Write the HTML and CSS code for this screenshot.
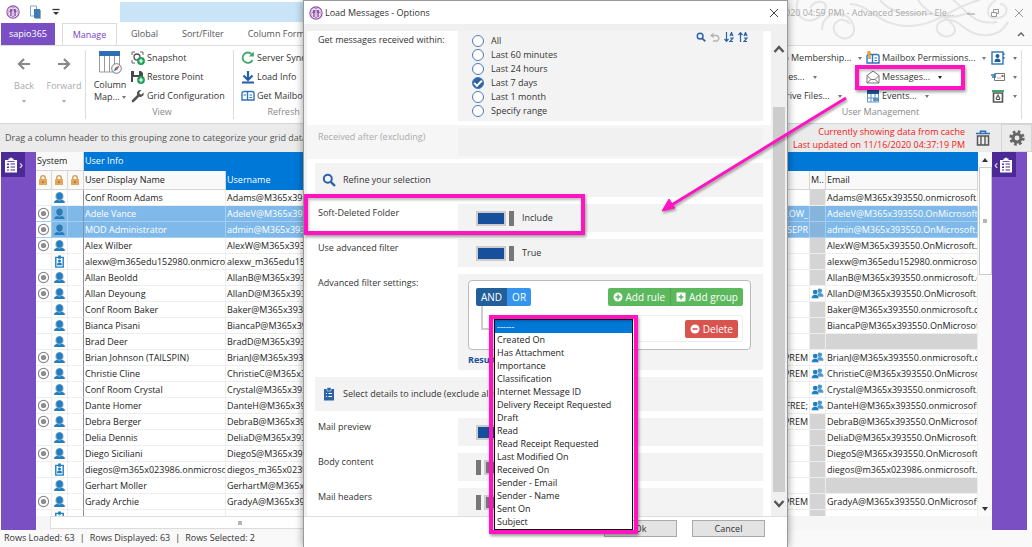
FILE: index.html
```html
<!DOCTYPE html>
<html lang="en">
	<head>
		<meta charset="UTF-8" />
		<meta name="viewport" content="width=device-width, initial-scale=1.0" />
		<title>sapio365 - Load Messages</title>
		<link rel="stylesheet" href="styles.css">
	</head>

	<body>
		<svg class="sprite" aria-hidden="true">
			<symbol id="logo" viewBox="0 0 16 16">
				<circle cx="8" cy="8" r="7" fill="#fff" stroke="#8e4fa8" stroke-width="1.3"/>
				<circle cx="8" cy="8" r="5.4" fill="none" stroke="#b88aca" stroke-width=".8"/>
				<path d="M5 4.5h2.2v2L6.5 8v4.5H4.800V8.500L3.500 8zM8.800 4.500H11L12.500 8l-1.300.5v4H9.500V8l-.7-1.500z" fill="#8e4fa8"/>
				<path d="M8 2v12" stroke="#8e4fa8" stroke-width=".8"/>
			</symbol>
			<symbol id="user" viewBox="0 0 14 14">
				<path d="M2.500 6a4.500 5 0 0 1 9 0c0 2-1 3-1.500 3.500l3 1.500v2H1v-2l3-1.500C3.500 9 2.500 8 2.500 6z" fill="#9fb4c4"/>
				<path d="M7 1.500c2.400 0 3.700 1.600 3.500 4C10.300 8 9 9.500 7 9.500S3.700 8 3.500 5.500c-.2-2.400 1.100-4 3.500-4zM1.500 13c0-2.500 1.500-3 3.500-3.200l2 .7 2-.7c2 .2 3.500.7 3.500 3.200z" fill="#1f7fc1"/>
			</symbol>
			<symbol id="badge" viewBox="0 0 14 14">
				<path d="M3 2.500h8V13H3z" fill="#fff" stroke="#1f7fc1" stroke-width="1.500"/>
				<path d="M5.500.5h3V4h-3z" fill="#1f7fc1"/>
				<circle cx="7" cy="6.500" r="1.600" fill="#1f7fc1"/>
				<path d="M4.300 11c0-2 1-2.800 2.700-2.800S9.700 9 9.700 11z" fill="#1f7fc1"/>
			</symbol>
			<symbol id="ring" viewBox="0 0 14 14">
				<circle cx="7" cy="7" r="5.500" fill="#fff" stroke="#8c8c8c" stroke-width="1.200"/>
				<circle cx="7" cy="7" r="2.800" fill="#8c8c8c"/>
			</symbol>
			<symbol id="people" viewBox="0 0 14 12">
				<circle cx="9.500" cy="3" r="2.500" fill="#4d97cc"/>
				<path d="M6.500 9.500c0-3 1-4 3-4s4 .8 4 4z" fill="#4d97cc"/>
				<circle cx="4.500" cy="4.500" r="2.500" fill="#1f7fc1"/>
				<path d="M.5 11.500c0-3 1.500-4.500 4-4.500s4 1.500 4 4.500z" fill="#1f7fc1" stroke="#fff" stroke-width=".5"/>
			</symbol>
			<symbol id="lock" viewBox="0 0 12 12">
				<path d="M3.800 5.500V3.800a2.200 2.200 0 0 1 4.400 0v1.700" fill="none" stroke="#d99b4c" stroke-width="1.400"/>
				<rect x="2" y="5" width="8" height="6" rx=".5" fill="#e3a857"/>
				<path d="M6 7v2" stroke="#8d5f22"/>
			</symbol>
			<symbol id="clipboard" viewBox="0 0 14 16">
				<path d="M1 3h12v12.500H1zM4.500 1.500h1.300L7 .2l1.200 1.300h1.300V4h-5z" fill="#fff"/>
				<path d="M3 6.500h2v1.500H3zM3 9.500h2V11H3zM3 12.500h2v1H3zM6.500 6.500H11v1H6.500zM6.500 9.500H11v1H6.500zM6.500 12.500H11v1H6.500z" fill="#4b2a96"/>
				<path d="M3.500 4.500h7" stroke="#4b2a96" stroke-width=".8"/>
			</symbol>
			<symbol id="search" viewBox="0 0 14 14">
				<circle cx="5.800" cy="5.800" r="4" fill="none" stroke="#2b62a8" stroke-width="2"/>
				<path d="M8.800 8.800L13 13" stroke="#2b62a8" stroke-width="2.400"/>
			</symbol>
			<symbol id="mailbox" viewBox="0 0 14 12">
				<path d="M1 10V3.500A2 2 0 0 1 3 1.500h8a2 2 0 0 1 2 2V10zM6.500 10V2" fill="#fff" stroke="#2e75b6" stroke-width="1.400"/>
				<path d="M2.500 5h2.500M8.500 5H11M8.500 7.500H11" stroke="#2e75b6" stroke-width="1.200"/>
			</symbol>
			<symbol id="plus" viewBox="0 0 8 8">
				<circle cx="4" cy="4" r="3.900" fill="#1e9e56"/>
				<path d="M4 1.800v4.400M1.800 4h4.400" stroke="#fff" stroke-width="1.200"/>
			</symbol>
		</svg>

		<div class="app">
			<header class="titlebar">
				<div class="quick-access">
					<svg class="i14"><use href="#logo"/></svg>
					<svg class="i14" viewBox="0 0 14 14"><path d="M1.500 1h6v10h-6z" fill="#fff" stroke="#7ba7cf"/><path d="M5 4h6v9H5z" fill="#3b7cb8"/><path d="M11.500 5v8.500H6" stroke="#aaa" fill="none"/></svg>
					<svg class="i10" viewBox="0 0 10 10"><path d="M1.500 2.500h7" stroke="#333" stroke-width="1.300"/><path d="M2 5h6L5 8z" fill="#333"/></svg>
				</div>
				<div class="title-fill"></div>
				<div class="title-right">
					<svg class="swirl" viewBox="0 0 244 45" fill="none" stroke="#e4e4e4" stroke-width="2">
						<path d="M10 0c-6 18 12 28 24 14S26-2 22 8M34 30c0-18 22-22 30-8s-8 22-16 12 6-20 14-10M62 4c20 0 28 22 58 22s44-20 72-26M92 0c20 24 50 6 68 20s-4 22-10 12 10-18 24-6 36 14 46-4M130 0c10 16 30 22 52 12M165 0c14 10 20 26 44 22M208 0c-12 8-10 20 2 18s10-14 2-14"/>
					</svg>
					<span class="window-title">(11/16/2020 04:59 PM) - Advanced Session - Ele...</span>
					<button class="win-btn" aria-label="Minimize"><svg class="i10" viewBox="0 0 10 10"><path d="M1 6h8" stroke="#999"/></svg></button>
					<button class="win-btn" aria-label="Restore"><svg class="i10" viewBox="0 0 10 10" fill="none" stroke="#999"><path d="M1.500 4.500h5v4h-5zM3.500 4V1.500h5v4H7"/></svg></button>
					<button class="win-btn" aria-label="Close window"><svg class="i10" viewBox="0 0 10 10"><path d="M1 1l8 8M9 1L1 9" stroke="#999"/></svg></button>
				</div>
			</header>
			<nav class="tabs">
				<button class="tab brand">sapio365</button>
				<button class="tab active">Manage</button>
				<button class="tab">Global</button>
				<button class="tab">Sort/Filter</button>
				<button class="tab">Column Format</button>
				<svg class="i10 collapse" viewBox="0 0 10 10"><path d="M2 7l3-3 3 3" fill="none" stroke="#666" stroke-width="1.500"/></svg>
			</nav>
			<section class="ribbon">
				<div class="history">
					<button class="cmd-tall muted">
						<svg class="i16" viewBox="0 0 16 16" fill="none" stroke="#888" stroke-width="2.200"><path d="M14 8H3M8 3L3 8l5 5"/></svg>
						<span>Back</span><i class="caret"></i>
					</button>
					<button class="cmd-tall muted">
						<svg class="i16" viewBox="0 0 16 16" fill="none" stroke="#888" stroke-width="2.200"><path d="M2 8h11M8 3l5 5-5 5"/></svg>
						<span>Forward</span><i class="caret"></i>
					</button>
				</div>
				<div class="group view-group">
					<div class="group-body">
						<button class="column-map">
							<svg class="i24" viewBox="0 0 24 24"><path d="M1.500 5h20v17h-20zM6.500 5v17M11.500 5v17M16.500 5v17" fill="#fff" stroke="#999"/><path d="M1 1h21v5H1z" fill="#2e6fb5"/><circle cx="18.500" cy="18.500" r="4.800" fill="#fff" stroke="#777"/><path d="M21.500 15.500l-2 4-2-2z" fill="#d9442c"/><path d="M15.500 21.500l2-4 2 2z" fill="#2e6fb5"/></svg>
							<span>Column<br>Map... <i class="caret"></i></span>
						</button>
						<div class="cmd-list">
							<button class="cmd"><svg class="i14" viewBox="0 0 14 14"><path d="M1 4V1h3M9 1h3v3M1 9v3h3" fill="none" stroke="#666"/><circle cx="6" cy="6" r="3" fill="none" stroke="#555" stroke-width="1.300"/><use href="#plus" x="6" y="6" width="8" height="8"/></svg>Snapshot</button>
							<button class="cmd"><svg class="i14" viewBox="0 0 14 14"><path d="M0 1h10l2 2v9H0z" fill="#4a4a4a"/><path d="M3 1h5v4H3zM2 7h8v5H2z" fill="#fff"/><use href="#plus" x="6" y="6" width="8" height="8"/></svg>Restore Point</button>
							<button class="cmd"><svg class="i14" viewBox="0 0 14 14"><path d="M2 12l5-5" stroke="#555" stroke-width="2.600" stroke-linecap="round"/><path d="M12.500 3.500L10.500 5.500 8.700 5l-.3-1.800 2-2A3.400 3.400 0 0 0 6 5.500 3.400 3.400 0 0 0 12.500 3.500z" fill="#555"/></svg>Grid Configuration</button>
						</div>
					</div>
					<div class="group-name">View</div>
				</div>
				<div class="group refresh-group">
					<div class="cmd-list">
						<button class="cmd"><svg class="i14" viewBox="0 0 14 14"><path d="M11.500 9A5.200 5.200 0 1 1 10.500 3" fill="none" stroke="#3fa66b" stroke-width="1.800"/><path d="M12.800.5v5h-5z" fill="#3fa66b"/></svg>Server Sync</button>
						<button class="cmd"><svg class="i14" viewBox="0 0 14 14"><path d="M7 1v9M2.500 5.500L7 10l4.500-4.500M1 12.500h12" fill="none" stroke="#2460a7" stroke-width="2.200"/></svg>Load Info</button>
						<button class="cmd"><svg class="i14"><use href="#mailbox"/></svg>Get Mailbox Info</button>
					</div>
					<div class="group-name">Refresh</div>
				</div>
				<div class="group user-group">
					<div class="group-body">
						<div class="cmd-list membership">
							<button class="cmd spread">Group Membership...<i class="caret"></i></button>
							<button class="cmd">Licenses...<i class="caret"></i></button>
							<button class="cmd">OneDrive Files...<i class="caret"></i></button>
						</div>
						<div class="cmd-list mail">
							<button class="cmd spread"><svg class="i14" viewBox="0 0 14 14"><use href="#mailbox" y="2" width="14" height="12"/><path d="M3 0v8M3 5h2" stroke="#e6a23c" stroke-width="1.600"/><circle cx="3" cy="2" r="2" fill="#e6a23c"/></svg>Mailbox Permissions...<i class="caret"></i></button>
							<button class="cmd"><svg class="i14" viewBox="0 0 14 14" fill="#fff" stroke="#777"><path d="M1 5.500L7 1l6 4.500V13H1z"/><path d="M1 5.500l4 4h4l4-4M1 13l4-3.500M13 13L9 9.500M5 9.500h4" fill="none"/></svg>Messages...<i class="caret dark"></i></button>
							<button class="cmd"><svg class="i14" viewBox="0 0 14 14"><path d="M1 1h12v4H1z" fill="#1f5c9e"/><path d="M1.500 5v8h11V5M1.500 9h11M5 5v8M9 5v8" fill="none" stroke="#5d93c4"/><path d="M7 9h5v3H7z" fill="#5d93c4"/></svg>Events...<i class="caret"></i></button>
						</div>
						<div class="cmd-list">
							<button class="cmd" aria-label="Contacts"><svg class="i14" viewBox="0 0 14 14"><rect x="1" y="1" width="11" height="12" fill="#fff" stroke="#2e75b6" stroke-width="1.400"/><path d="M3.500 11c0-3 1-3.500 3-3.500s3 .5 3 3.500z" fill="#1f5c9e"/><circle cx="6.500" cy="5" r="2" fill="#1f5c9e"/><path d="M12 2h1.500v2H12zM12 6h1.500v2H12z" fill="#2e75b6"/></svg><i class="caret"></i></button>
							<button class="cmd" aria-label="Send mail"><svg class="i14" viewBox="0 0 14 14"><path d="M3.500 3.500h10v7h-10z" fill="#fff" stroke="#777"/><path d="M0 5h5M1 7h4" stroke="#2e75b6" stroke-width="1.400"/><path d="M10.500 5h2v2h-2z" fill="#d9442c"/><path d="M6 8h4" stroke="#aaa"/></svg><i class="caret"></i></button>
							<button class="cmd" aria-label="Recycle bin"><svg class="i14" viewBox="0 0 14 14"><path d="M1 2h12" stroke="#3fa66b" stroke-width="2"/><path d="M2.500 4h9v9h-9z" fill="#fff" stroke="#555" stroke-width="1.600"/><path d="M5 10l2-4 2 4M5 10.500h4" fill="none" stroke="#555" stroke-width="1.200"/></svg><i class="caret"></i></button>
						</div>
					</div>
					<div class="group-name">User Management</div>
				</div>
			</section>

			<section class="groupbar">
				<span>Drag a column header to this grouping zone to categorize your grid data</span>
				<p class="cache-note">Currently showing data from cache<br>Last updated on 11/16/2020 04:37:19 PM</p>
				<button class="bar-btn" aria-label="Clear cache"><svg class="i16" viewBox="0 0 16 16"><path d="M1 3.500h14M5.500 3V1.200h5V3" fill="none" stroke="#2e6fb5" stroke-width="1.600"/><path d="M2.500 6h11v9h-11z" fill="#eee" stroke="#555" stroke-width="1.500"/><path d="M6 6v9M10 6v9" stroke="#555" stroke-width="1.400"/></svg></button>
				<button class="bar-btn gear" aria-label="Settings"><svg class="i16" viewBox="0 0 16 16"><circle cx="8" cy="8" r="6.300" fill="none" stroke="#666" stroke-width="2.800" stroke-dasharray="2.600 2.350"/><circle cx="8" cy="8" r="4" fill="none" stroke="#666" stroke-width="3.200"/></svg></button>
			</section>

			<main class="workspace">
				<aside class="side left"><button class="side-btn" aria-label="Open views panel"><svg class="i16"><use href="#clipboard"/></svg><b>›</b></button></aside>
				<div class="grid-area">
					<div class="grid-scroll">
						<table class="grid">
							<colgroup><col class="c-icon"><col class="c-icon"><col class="c-icon"><col class="c-name"><col><col class="c-plan"><col class="c-icon"><col class="c-email"></colgroup>
							<thead>
								<tr><th colspan="3">System</th><th colspan="5" class="blue">User Info</th></tr>
								<tr><th><svg class="i12"><use href="#lock"/></svg></th><th><svg class="i12"><use href="#lock"/></svg></th><th><svg class="i12"><use href="#lock"/></svg></th><th>User Display Name</th><th class="blue">Username</th><th></th><th>M..</th><th>Email</th></tr>
							</thead>
							<tbody>
								<tr><td></td><td><svg><use href="#user"/></svg></td><td></td><td>Conf Room Adams</td><td>Adams@M365x393550.onmicrosoft.com</td><td></td><td class="na"></td><td>Adams@M365x393550.onmicrosoft.com</td></tr>
								<tr class="sel"><td class="mark"><svg><use href="#ring"/></svg></td><td><svg><use href="#user"/></svg></td><td></td><td>Adele Vance</td><td>AdeleV@M365x393550.OnMicrosoft.com</td><td>FLOW_</td><td class="na"></td><td>AdeleV@M365x393550.OnMicrosoft.com</td></tr>
								<tr class="sel"><td class="mark"><svg><use href="#ring"/></svg></td><td><svg><use href="#user"/></svg></td><td></td><td>MOD Administrator</td><td>admin@M365x393550.OnMicrosoft.com</td><td>ENTERPRISEPR</td><td class="na"></td><td>admin@M365x393550.OnMicrosoft.com</td></tr>
								<tr><td><svg><use href="#ring"/></svg></td><td><svg><use href="#user"/></svg></td><td></td><td>Alex Wilber</td><td>AlexW@M365x393550.OnMicrosoft.com</td><td></td><td class="na"></td><td>AlexW@M365x393550.OnMicrosoft.com</td></tr>
								<tr><td></td><td><svg><use href="#badge"/></svg></td><td></td><td>alexw@m365edu152980.onmicrosoft.com</td><td>alexw_m365edu152980.onmicrosoft.com</td><td></td><td class="na"></td><td>alexw@m365edu152980.onmicrosoft.com</td></tr>
								<tr><td><svg><use href="#ring"/></svg></td><td><svg><use href="#user"/></svg></td><td></td><td>Allan Beoldd</td><td>AllanB@M365x393550.onmicrosoft.com</td><td></td><td class="na"></td><td>AllanB@M365x393550.onmicrosoft.com</td></tr>
								<tr><td><svg><use href="#ring"/></svg></td><td><svg><use href="#user"/></svg></td><td></td><td>Allan Deyoung</td><td>AllanD@M365x393550.OnMicrosoft.com</td><td></td><td><svg><use href="#people"/></svg></td><td>AllanD@M365x393550.OnMicrosoft.com</td></tr>
								<tr><td></td><td><svg><use href="#user"/></svg></td><td></td><td>Conf Room Baker</td><td>Baker@M365x393550.onmicrosoft.com</td><td></td><td class="na"></td><td>Baker@M365x393550.onmicrosoft.com</td></tr>
								<tr><td></td><td><svg><use href="#user"/></svg></td><td></td><td>Bianca Pisani</td><td>BiancaP@M365x393550.OnMicrosoft.com</td><td></td><td class="na"></td><td>BiancaP@M365x393550.OnMicrosoft.com</td></tr>
								<tr><td></td><td><svg><use href="#user"/></svg></td><td></td><td>Brad Deer</td><td>BradD@M365x393550.OnMicrosoft.com</td><td></td><td class="na"></td><td class="na"></td></tr>
								<tr><td><svg><use href="#ring"/></svg></td><td><svg><use href="#user"/></svg></td><td></td><td>Brian Johnson (TAILSPIN)</td><td>BrianJ@M365x393550.onmicrosoft.com</td><td>PREM</td><td><svg><use href="#people"/></svg></td><td>BrianJ@M365x393550.onmicrosoft.com</td></tr>
								<tr><td><svg><use href="#ring"/></svg></td><td><svg><use href="#user"/></svg></td><td></td><td>Christie Cline</td><td>ChristieC@M365x393550.OnMicrosoft.com</td><td>PREM</td><td><svg><use href="#people"/></svg></td><td>ChristieC@M365x393550.OnMicrosoft.com</td></tr>
								<tr><td></td><td><svg><use href="#user"/></svg></td><td></td><td>Conf Room Crystal</td><td>Crystal@M365x393550.onmicrosoft.com</td><td></td><td><svg><use href="#people"/></svg></td><td>Crystal@M365x393550.onmicrosoft.com</td></tr>
								<tr><td><svg><use href="#ring"/></svg></td><td><svg><use href="#user"/></svg></td><td></td><td>Dante Homer</td><td>DanteH@M365x393550.onmicrosoft.com</td><td>FREE;</td><td><svg><use href="#people"/></svg></td><td>DanteH@M365x393550.onmicrosoft.com</td></tr>
								<tr><td><svg><use href="#ring"/></svg></td><td><svg><use href="#user"/></svg></td><td></td><td>Debra Berger</td><td>DebraB@M365x393550.OnMicrosoft.com</td><td>PREM</td><td class="na"></td><td>DebraB@M365x393550.OnMicrosoft.com</td></tr>
								<tr><td></td><td><svg><use href="#user"/></svg></td><td></td><td>Delia Dennis</td><td>DeliaD@M365x393550.OnMicrosoft.com</td><td></td><td class="na"></td><td>DeliaD@M365x393550.OnMicrosoft.com</td></tr>
								<tr><td><svg><use href="#ring"/></svg></td><td><svg><use href="#user"/></svg></td><td></td><td>Diego Siciliani</td><td>DiegoS@M365x393550.OnMicrosoft.com</td><td></td><td class="na"></td><td>DiegoS@M365x393550.OnMicrosoft.com</td></tr>
								<tr><td></td><td><svg><use href="#badge"/></svg></td><td></td><td>diegos@m365x023986.onmicrosoft.com</td><td>diegos_m365x023986.onmicrosoft.com</td><td></td><td class="na"></td><td>diegos@m365x023986.onmicrosoft.com</td></tr>
								<tr><td></td><td><svg><use href="#user"/></svg></td><td></td><td>Gerhart Moller</td><td>GerhartM@M365x393550.OnMicrosoft.com</td><td></td><td class="na"></td><td class="na"></td></tr>
								<tr><td><svg><use href="#ring"/></svg></td><td><svg><use href="#user"/></svg></td><td></td><td>Grady Archie</td><td>GradyA@M365x393550.OnMicrosoft.com</td><td>PREM</td><td class="na"></td><td>GradyA@M365x393550.OnMicrosoft.com</td></tr>
								<tr><td></td><td><svg><use href="#badge"/></svg></td><td></td><td></td><td></td><td></td><td class="na"></td><td></td></tr>
							</tbody>
						</table>
						<div class="vscroll"><i class="up"></i><div class="vthumb"></div><i class="down"></i></div>
					</div>
					<div class="hscroll"><div class="hthumb"></div></div>
				</div>
				<aside class="side right"><button class="side-btn" aria-label="Open details panel"><b>‹</b><svg class="i16"><use href="#clipboard"/></svg></button></aside>
			</main>

			<footer class="status"><span>Rows Loaded: 63</span><span>|</span><span>Rows Displayed: 63</span><span>|</span><span>Rows Selected: 2</span></footer>
		</div>

		<div class="dialog" role="dialog" aria-labelledby="dialog-title">
			<header class="dialog-title">
				<svg class="i14"><use href="#logo"/></svg>
				<h1 id="dialog-title">Load Messages - Options</h1>
				<button class="win-btn" aria-label="Close"><svg class="i10" viewBox="0 0 10 10"><path d="M1 1l8 8M9 1L1 9" stroke="#444"/></svg></button>
			</header>
			<div class="dialog-main">
				<form class="options">
					<div class="option">
						<span class="option-label" id="within">Get messages received within:</span>
						<div class="option-value period">
							<div class="radios" role="radiogroup" aria-labelledby="within">
								<label><input type="radio" name="period">All</label>
								<label><input type="radio" name="period">Last 60 minutes</label>
								<label><input type="radio" name="period">Last 24 hours</label>
								<label><input type="radio" name="period" checked>Last 7 days</label>
								<label><input type="radio" name="period">Last 1 month</label>
								<label><input type="radio" name="period">Specify range</label>
							</div>
							<div class="tools">
								<svg class="i10"><use href="#search"/></svg>
								<svg class="i10" viewBox="0 0 10 10"><path d="M2 3.500h4.500a2.800 2.800 0 0 1 0 5.500H3" fill="none" stroke="#b5b5b5" stroke-width="1.400"/><path d="M0 3.500L3.500.8v5.400z" fill="#b5b5b5"/></svg>
								<svg class="i10" viewBox="0 0 10 10" fill="none" stroke="#2b62a8" stroke-width="1.200"><path d="M2.500 0v9M.5 7l2 2.300 2-2.300M6 4l1.500-3.500L9 4M6.500 3h2M6 6h3L6 9.500h3"/></svg>
								<svg class="i10" viewBox="0 0 10 10" fill="none" stroke="#2b62a8" stroke-width="1.200"><path d="M2.500 1v9M.5 3l2-2.300 2 2.300M6 4l1.500-3.500L9 4M6.500 3h2M6 6h3L6 9.500h3"/></svg>
							</div>
						</div>
					</div>
					<div class="option disabled">
						<span class="option-label">Received after (excluding)</span>
						<div class="option-value"></div>
					</div>
					<h2 class="section"><svg class="i14"><use href="#search"/></svg>Refine your selection</h2>
					<div class="option">
						<label class="option-label" for="soft">Soft-Deleted Folder</label>
						<div class="option-value"><input type="checkbox" id="soft" checked>Include</div>
					</div>
					<div class="option">
						<label class="option-label" for="advanced">Use advanced filter</label>
						<div class="option-value"><input type="checkbox" id="advanced" checked>True</div>
					</div>
					<div class="option">
						<span class="option-label">Advanced filter settings:</span>
						<div class="option-value builder">
							<div class="rules">
								<div class="rules-head">
									<div class="joined and-or"><button type="button" class="on">AND</button><button type="button">OR</button></div>
									<div class="joined add">
										<button type="button"><svg class="i10" viewBox="0 0 10 10"><circle cx="5" cy="5" r="4.500" fill="#fff"/><path d="M5 2.500v5M2.500 5h5" stroke="#5cb85c" stroke-width="1.500"/></svg>Add rule</button><button type="button"><svg class="i10" viewBox="0 0 10 10"><rect x=".5" y=".5" width="9" height="9" rx="1" fill="#fff"/><path d="M5 2.500v5M2.500 5h5" stroke="#5cb85c" stroke-width="1.500"/></svg>Add group</button>
									</div>
								</div>
								<div class="rule">
									<i class="branch"></i>
									<button type="button" class="delete"><svg class="i10" viewBox="0 0 10 10"><circle cx="5" cy="5" r="4.500" fill="#fff"/><path d="M2.500 5h5" stroke="#d9534f" stroke-width="1.600"/></svg>Delete</button>
								</div>
							</div>
							<strong class="result">Result</strong>
						</div>
					</div>
					<h2 class="section"><svg class="i14" viewBox="0 0 14 14"><path d="M2 2h10v11.500H2z" fill="#2b62a8"/><path d="M5 .5h4V4H5z" fill="#2b62a8" stroke="#fff" stroke-width=".5"/><path d="M4 6.500h1M6.500 6.500H10M4 9.500h1M6.500 9.500H10" stroke="#fff" stroke-width="1.200"/></svg>Select details to include (exclude all to speed up loading)</h2>
					<div class="option">
						<label class="option-label" for="preview">Mail preview</label>
						<div class="option-value"><input type="checkbox" id="preview" checked></div>
					</div>
					<div class="option">
						<label class="option-label" for="body-content">Body content</label>
						<div class="option-value"><input type="checkbox" id="body-content"></div>
					</div>
					<div class="option">
						<label class="option-label" for="headers">Mail headers</label>
						<div class="option-value"><input type="checkbox" id="headers"></div>
					</div>
				</form>
				<div class="dialog-scroll">
					<svg class="i12" viewBox="0 0 12 12"><path d="M1.500 9L6 4l4.500 5" fill="none" stroke="#555" stroke-width="2.400"/></svg>
					<div class="dialog-thumb"></div>
					<svg class="i12" viewBox="0 0 12 12"><path d="M1.500 3L6 8l4.500-5" fill="none" stroke="#555" stroke-width="2.400"/></svg>
				</div>
			</div>
			<footer class="dialog-footer">
				<button>Ok</button>
				<button>Cancel</button>
			</footer>

			<select class="fields" size="16" aria-label="Filter field">
				<option selected>------</option>
				<option>Created On</option>
				<option>Has Attachment</option>
				<option>Importance</option>
				<option>Classification</option>
				<option>Internet Message ID</option>
				<option>Delivery Receipt Requested</option>
				<option>Draft</option>
				<option>Read</option>
				<option>Read Receipt Requested</option>
				<option>Last Modified On</option>
				<option>Received On</option>
				<option>Sender - Email</option>
				<option>Sender - Name</option>
				<option>Sent On</option>
				<option>Subject</option>
			</select>
			<div class="callout callout-fields"></div>
			<div class="callout callout-soft"></div>
		</div>

		<div class="callout callout-messages"></div>
		<svg class="arrow" viewBox="0 0 190 120">
			<path d="M186 3L10 111" stroke="#ff14c0" stroke-width="3"/>
			<path d="M2 116l7-12 6 9z" fill="#ff14c0" stroke="#ff14c0"/>
		</svg>
	</body>
</html>
```
FILE: styles.css
```css
* {
	box-sizing: border-box;
}

html, body {
	margin: 0;
	height: 100%;
	overflow: hidden;
}

body, button, input, select {
	font-family: 'Open Sans', 'Segoe UI', sans-serif;
	font-size: 9px;
	line-height: 14px;
	color: #333;
}

body {
	position: relative;
	background: #fff;
}

button {
	border: 0;
	padding: 0;
	background: none;
	white-space: nowrap;
}

h1, h2, p {
	margin: 0;
	font-size: 9px;
	font-weight: normal;
}

svg {
	display: block;
	flex: none;
}

.sprite { position: absolute; width: 0; height: 0; }
.i10 { width: 10px; height: 10px; }
.i12 { width: 12px; height: 12px; }
.i14 { width: 14px; height: 14px; }
.i16 { width: 16px; height: 16px; }
.i24 { width: 24px; height: 24px; }

.caret {
	display: inline-block;
	border: 2px solid transparent;
	border-top: 3px solid #777;
	border-bottom: 0;
	vertical-align: middle;
}

.caret.dark {
	border-top-color: #222;
}

.app {
	display: flex;
	flex-direction: column;
	height: 100%;
}

/* title bar and ribbon */

.titlebar {
	display: flex;
	height: 23px;
	flex: none;
}

.quick-access {
	display: flex;
	align-items: center;
	gap: 8px;
	width: 120px;
	padding-left: 6px;
}

.quick-access .i14:first-child {
	margin-right: 1px;
}

.title-fill {
	flex: 1;
	margin: 2px 0 1px;
	background: #c9e4f7;
}

.title-right {
	position: relative;
	display: flex;
	align-items: center;
	justify-content: flex-end;
	gap: 12px;
	width: 244px;
	height: 26px;
	padding-right: 6px;
	color: #aaa;
}

.swirl {
	position: absolute;
	top: 0;
	left: 0;
	width: 244px;
	height: 45px;
	background: #f9f9f9;
}

.window-title {
	position: relative;
	flex: none;
	white-space: nowrap;
}

.win-btn {
	position: relative;
}

.title-right .win-btn {
	margin-right: 2px;
}

.tabs {
	display: flex;
	height: 23px;
	flex: none;
	padding-left: 1px;
	border-bottom: 1px solid #ddd;
}

.tab {
	padding: 0 12px;
	color: #555;
}

.tab.brand {
	width: 54px;
	padding: 0;
	margin-right: 7px;
	background: #7b4fc4;
	color: #fff;
}

.tab.active {
	width: 55px;
	margin-right: 2px;
	padding: 0;
	border: 1px solid #ddd;
	border-bottom: 0;
	color: #7b3fc0;
}

.collapse {
	position: relative;
	align-self: center;
	margin: 0 6px 0 auto;
}

.ribbon {
	display: flex;
	flex: none;
	height: 78px;
	padding: 4px 10px 4px 0;
	border-bottom: 1px solid #d4d4d4;
}

.history {
	display: flex;
	width: 86px;
	border-right: 1px solid #ddd;
}

.cmd-tall {
	display: flex;
	flex-direction: column;
	align-items: center;
	width: 40px;
	padding: 6px 0 0 8px;
	gap: 7px;
}

.muted {
	color: #aaa;
}

.muted .caret {
	border-top-color: #aaa;
}

.group {
	display: flex;
	flex-direction: column;
}

.group-body {
	display: flex;
}

.group-name {
	margin-top: auto;
	text-align: center;
	color: #888;
}

.view-group {
	width: 148px;
	padding-left: 5px;
	border-right: 1px solid #ddd;
}

.column-map {
	display: flex;
	flex-direction: column;
	align-items: center;
	gap: 5px;
	width: 38px;
	margin-right: 2px;
	line-height: 12px;
}

.cmd-list {
	display: flex;
	flex-direction: column;
	gap: 3px;
}

.cmd {
	display: flex;
	align-items: center;
	height: 16px;
	gap: 2px;
}

.cmd .caret {
	margin-left: 6px;
}

.refresh-group {
	padding-left: 7px;
}

.user-group {
	width: 260px;
	margin-left: auto;
	border-right: 1px solid #ddd;
}

.user-group .group-name {
	margin-right: 22px;
}

.spread .caret {
	margin-left: auto;
}

.membership {
	width: 100px;
	margin-right: 4px;
}

.mail {
	width: 120px;
	margin-right: 5px;
}

.groupbar {
	display: flex;
	align-items: center;
	flex: none;
	height: 28px;
	padding-left: 5px;
	background: #ebebeb;
	color: #555;
}

.cache-note {
	margin-left: auto;
	text-align: right;
	color: #f21818;
	line-height: 13px;
}

.bar-btn {
	display: grid;
	place-items: center;
	width: 36px;
	height: 28px;
}

.gear {
	width: 31px;
	border: 1px solid #d6d6d6;
}

/* grid */

.workspace {
	display: flex;
	flex: 1;
	min-height: 0;
	padding: 0 5px 0 1px;
}

.side {
	flex: none;
	width: 35px;
	background: #7a4fc3;
}

.side-btn {
	display: flex;
	align-items: center;
	justify-content: center;
	width: 24px;
	height: 25px;
	background: #4b2a96;
	color: #fff;
}

.side-btn b {
	font-size: 12px;
	font-weight: normal;
}

.grid-area {
	display: flex;
	flex-direction: column;
	flex: 1;
	min-width: 0;
}

.grid-scroll {
	display: flex;
	flex: 1;
	min-height: 0;
	overflow: hidden;
}

.grid {
	flex: 1;
	width: 100%;
	align-self: flex-start;
	table-layout: fixed;
	border-collapse: separate;
	border-spacing: 0;
}

.c-icon { width: 16px; }
.c-name { width: 142px; }
.c-plan { width: 100px; }
.c-email { width: 152px; }

.grid th,
.grid td {
	overflow: hidden;
	padding: 0 1px;
	border-right: 1px solid #eee;
	border-bottom: 1px solid #eee;
	white-space: nowrap;
	text-align: left;
	font-weight: normal;
	color: #222;
}

.grid th {
	height: 19px;
	background: #f9f9f9;
	border-color: #d5d5d5;
}

.grid th.blue {
	background: #0078d7;
	border-color: #0078d7;
	color: #fff;
}

.grid td {
	height: 16px;
	line-height: 15px;
}

.grid tr td:nth-child(3) {
	border-right-color: #8a8fa8;
}

.grid td svg {
	width: 13px;
	height: 13px;
}

.grid td:nth-child(6) {
	text-align: right;
}

.grid .na {
	background: #d4d4d4;
}

.grid .sel td {
	background: #7fb9e9;
	border-color: #a5cff1;
	color: #fff;
}

.grid .sel .mark {
	background: #fff;
}

.grid .sel .na {
	background: #86b4dc;
}

.vscroll {
	display: flex;
	flex-direction: column;
	align-items: center;
	flex: none;
	width: 14px;
	background: #fafafa;
}

.vscroll .up,
.vscroll .down {
	margin: 6px 0 5px;
	border: 3px solid transparent;
}

.vscroll .up {
	border-top: 0;
	border-bottom: 4px solid #333;
}

.vscroll .down {
	margin-top: auto;
	border-bottom: 0;
	border-top: 4px solid #333;
}

.vthumb {
	display: grid;
	place-items: center;
	width: 13px;
	height: 108px;
	border: 1px solid #ccc;
	background: #fff;
}

.vthumb::after,
.hthumb::after {
	content: '';
	width: 4px;
	height: 4px;
	background: #b5b5b5;
}

.hscroll {
	flex: none;
	height: 14px;
	padding: 0 14px 1px 14px;
	background: #f6f6f6;
}

.hthumb {
	display: grid;
	place-items: center;
	width: 380px;
	height: 13px;
	border: 1px solid #ddd;
	background: #fff;
}

.status {
	display: flex;
	flex: none;
	gap: 5px;
	height: 17px;
	padding: 1px 4px;
	background: #f9f9f9;
}

/* dialog */

.dialog {
	position: absolute;
	top: 0;
	bottom: 0;
	left: 303px;
	right: 244px;
	display: flex;
	flex-direction: column;
	border: 1px solid #999;
	border-bottom: 0;
	background: #fff;
	box-shadow: 0 0 8px #0006;
}

.dialog-title {
	display: flex;
	align-items: center;
	gap: 2px;
	height: 23px;
	padding: 0 8px 0 5px;
}

.dialog-title .win-btn {
	margin-left: auto;
}

.dialog-main {
	display: flex;
	flex: 1;
	min-height: 0;
	padding: 7px 0 0 3px;
	border-bottom: 1px solid #ddd;
	background: #f0f0f0;
}

.options {
	flex: 1;
	min-width: 0;
	overflow: hidden;
	background: #fff;
}

.option {
	display: flex;
	margin-bottom: 7px;
}

.option-label {
	width: 151px;
	flex: none;
	padding: 2px 0 0 11px;
}

.option-value {
	display: flex;
	align-items: center;
	flex: 1;
	min-width: 0;
	min-height: 28px;
	margin-right: 8px;
	padding: 0 18px;
	background: #f3f3f3;
}

.period {
	align-items: flex-start;
	justify-content: space-between;
	height: 90px;
	padding: 3px 15px 0 14px;
}

.radios {
	display: flex;
	flex-direction: column;
}

.radios label {
	display: flex;
	align-items: center;
	gap: 7px;
}

input[type=radio] {
	appearance: none;
	display: grid;
	place-items: center;
	width: 12px;
	height: 12px;
	margin: 0;
	border: 1px solid #4a7bb8;
	border-radius: 50%;
	background: #fff;
}

input[type=radio]:checked {
	background: #2b62a0;
}

input[type=radio]:checked::after {
	content: '';
	width: 6px;
	height: 3px;
	margin-bottom: 2px;
	border: solid #fff;
	border-width: 0 0 2px 2px;
	transform: rotate(-45deg);
}

.tools {
	display: flex;
	gap: 4px;
	margin-top: -2px;
}

.option:has(.period) {
	margin-bottom: 4px;
}

.option.disabled {
	margin-bottom: 4px;
	padding: 3px 0;
	background: #f6f6f6;
	color: #aaa;
}

.disabled .option-value {
	background: #f1f1f1;
}

.section {
	display: flex;
	align-items: center;
	gap: 7px;
	height: 34px;
	margin: 0 8px 7px;
	padding: 0 7px;
	background: #f3f3f3;
	white-space: nowrap;
	overflow: hidden;
}

input[type=checkbox] {
	appearance: none;
	display: flex;
	gap: 3px;
	width: 38px;
	height: 15px;
	margin: 0 8px 0 0;
}

input[type=checkbox]::before {
	content: '';
	width: 5px;
	background: #777;
}

input[type=checkbox]::after {
	content: '';
	flex: 1;
	border: 2px solid #ccc;
	background: #777;
}

input[type=checkbox]:checked {
	flex-direction: row-reverse;
}

input[type=checkbox]:checked::after {
	background: #174f9c;
}

.builder {
	flex-direction: column;
	align-items: stretch;
	height: 96px;
	padding: 6px 12px 0 10px;
}

.rules {
	height: 70px;
	padding: 7px;
	border: 1px solid #bbb;
	border-radius: 4px;
	background: #fff;
}

.rules-head {
	display: flex;
	justify-content: space-between;
}

.joined {
	display: flex;
	height: 18px;
	border-radius: 2px;
	overflow: hidden;
}

.joined button,
.delete {
	display: flex;
	align-items: center;
	gap: 3px;
	padding: 0 5px;
	color: #fff;
	font-size: 10px;
}

.and-or button { background: #3595ee; }
.and-or .on { background: #235f98; }
.add button { background: #5cb85c; }
.add button + button { border-left: 1px solid #4ba64b; }

.rule {
	position: relative;
	display: flex;
	justify-content: flex-end;
	align-items: center;
	height: 27px;
	margin: 9px 0 0 14px;
	padding-right: 4px;
	border: 1px solid #eee;
	border-radius: 3px;
}

.branch {
	position: absolute;
	top: -10px;
	left: -10px;
	width: 10px;
	height: 24px;
	border: solid #ccc;
	border-width: 0 0 2px 2px;
}

.delete {
	height: 18px;
	border-radius: 2px;
	background: #d9534f;
}

.result {
	margin-top: 3px;
	color: #174f9c;
}

.dialog-scroll {
	display: flex;
	flex-direction: column;
	align-items: center;
	gap: 6px;
	flex: none;
	width: 16px;
	padding: 12px 0 6px;
}

.dialog-thumb {
	flex: 1;
	width: 12px;
	margin-top: 46px;
	background: #cdcdcd;
}

.dialog-footer {
	display: flex;
	justify-content: flex-end;
	gap: 15px;
	flex: none;
	height: 30px;
	padding: 3px 22px 10px;
}

.dialog-footer button {
	width: 73px;
	border: 1px solid #aaa;
	background: #e3e3e3;
}

.fields {
	position: absolute;
	top: 318px;
	left: 190px;
	width: 139px;
	height: 211px;
	padding: 0;
	border: 1px solid #111;
	border-radius: 0;
	background: #fff;
	overflow: hidden;
}

.fields option {
	height: 13px;
	min-height: 13px;
	padding: 0 2px;
	line-height: 13px;
	color: #222;
}

.fields option:checked {
	background: #0078d7 linear-gradient(#0078d7, #0078d7);
	color: #fff;
}

/* callouts */

.callout {
	position: absolute;
	border: 4px solid #ff14c0;
	box-shadow: 1px 2px 3px #0006, inset 1px 2px 3px #0004;
	pointer-events: none;
}

.callout-fields {
	top: 314px;
	left: 185px;
	width: 149px;
	height: 219px;
}

.callout-soft {
	top: 193px;
	left: 0;
	width: 281px;
	height: 41px;
}

.callout-messages {
	top: 65px;
	right: 67px;
	width: 110px;
	height: 25px;
}

.arrow {
	position: absolute;
	top: 95px;
	right: 182px;
	width: 190px;
	height: 120px;
	filter: drop-shadow(1px 2px 1px #0005);
}
```
